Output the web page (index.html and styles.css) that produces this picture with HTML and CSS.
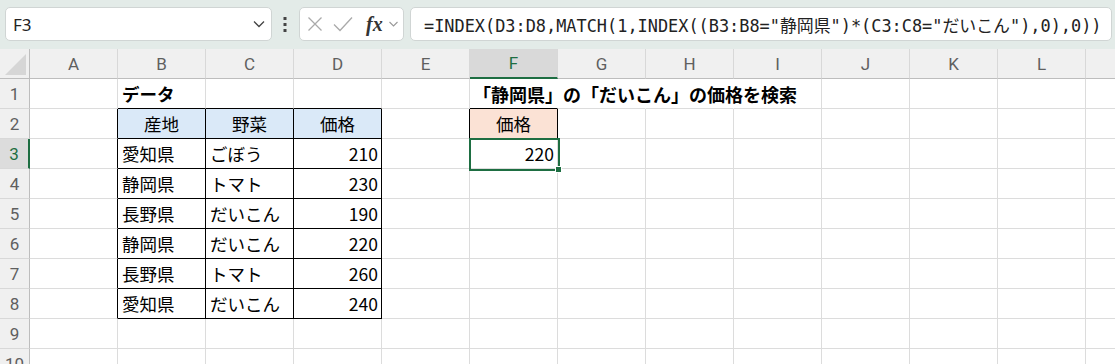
FILE: index.html
```html
<!DOCTYPE html>
<html lang="ja">
<head>
    <meta charset="UTF-8">
    <meta name="viewport" content="width=device-width, initial-scale=1.0">
    <title>価格の検索</title>
    <link rel="stylesheet" href="styles.css">
</head>
<body>
    <div class="toolbar">
        <div class="name-box">
            <span>F3</span>
            <svg width="12" height="8" viewBox="0 0 12 8"><path d="M1 1.5l5 5 5-5" fill="none" stroke="#444" stroke-width="1.3"/></svg>
        </div>
        <svg class="more" width="4" height="15" viewBox="0 0 4 15">
            <rect x="0.5" y="0" width="3" height="3" fill="#444"/>
            <rect x="0.5" y="6" width="3" height="3" fill="#444"/>
            <rect x="0.5" y="12" width="3" height="3" fill="#444"/>
        </svg>
        <div class="fx-box">
            <svg width="16" height="16" viewBox="0 0 16 16"><path d="M1.5 1.5l13 13M14.5 1.5l-13 13" stroke="#aaa" stroke-width="1.3" fill="none"/></svg>
            <svg width="20" height="16" viewBox="0 0 20 16"><path d="M1 8.5l6 6 12-13" stroke="#aaa" stroke-width="1.3" fill="none"/></svg>
            <span class="fx">fx</span>
            <svg width="9" height="6" viewBox="0 0 9 6"><path d="M0.5 1l4 4 4-4" fill="none" stroke="#999" stroke-width="1.1"/></svg>
        </div>
        <div class="formula">=INDEX(D3:D8,MATCH(1,INDEX((B3:B8="静岡県")*(C3:C8="だいこん"),0),0))</div>
    </div>

    <div class="sheet">
        <!-- column headers -->
        <div class="corner"><svg width="29" height="29" viewBox="0 0 29 29"><path d="M26 5V26H5Z" fill="#d6d6d6"/></svg></div>
        <div class="col-head">A</div>
        <div class="col-head">B</div>
        <div class="col-head">C</div>
        <div class="col-head">D</div>
        <div class="col-head">E</div>
        <div class="col-head sel">F</div>
        <div class="col-head">G</div>
        <div class="col-head">H</div>
        <div class="col-head">I</div>
        <div class="col-head">J</div>
        <div class="col-head">K</div>
        <div class="col-head">L</div>
        <div class="col-head"></div>

        <!-- row 1 -->
        <div class="row-head">1</div>
        <div class="cell"></div>
        <div class="cell t-b bold">データ</div>
        <div class="cell t-b"></div>
        <div class="cell t-b"></div>
        <div class="cell"></div>
        <div class="cell t-b ovf bold title">「静岡県」の「だいこん」の価格を検索</div>
        <div class="cell ovf"></div>
        <div class="cell ovf"></div>
        <div class="cell"></div>
        <div class="cell"></div>
        <div class="cell"></div>
        <div class="cell"></div>
        <div class="cell"></div>

        <!-- row 2 -->
        <div class="row-head">2</div>
        <div class="cell t-r"></div>
        <div class="cell tbl head-blue center">産地</div>
        <div class="cell tbl head-blue center">野菜</div>
        <div class="cell tbl head-blue center">価格</div>
        <div class="cell t-r"></div>
        <div class="cell tbl head-orange center">価格</div>
        <div class="cell"></div>
        <div class="cell"></div>
        <div class="cell"></div>
        <div class="cell"></div>
        <div class="cell"></div>
        <div class="cell"></div>
        <div class="cell"></div>

        <!-- row 3 -->
        <div class="row-head sel">3</div>
        <div class="cell t-r"></div>
        <div class="cell tbl">愛知県</div>
        <div class="cell tbl">ごぼう</div>
        <div class="cell tbl num">210</div>
        <div class="cell"></div>
        <div class="cell num active">220</div>
        <div class="cell"></div>
        <div class="cell"></div>
        <div class="cell"></div>
        <div class="cell"></div>
        <div class="cell"></div>
        <div class="cell"></div>
        <div class="cell"></div>

        <!-- row 4 -->
        <div class="row-head">4</div>
        <div class="cell t-r"></div>
        <div class="cell tbl">静岡県</div>
        <div class="cell tbl">トマト</div>
        <div class="cell tbl num">230</div>
        <div class="cell"></div>
        <div class="cell"></div>
        <div class="cell"></div>
        <div class="cell"></div>
        <div class="cell"></div>
        <div class="cell"></div>
        <div class="cell"></div>
        <div class="cell"></div>
        <div class="cell"></div>

        <!-- row 5 -->
        <div class="row-head">5</div>
        <div class="cell t-r"></div>
        <div class="cell tbl">長野県</div>
        <div class="cell tbl">だいこん</div>
        <div class="cell tbl num">190</div>
        <div class="cell"></div>
        <div class="cell"></div>
        <div class="cell"></div>
        <div class="cell"></div>
        <div class="cell"></div>
        <div class="cell"></div>
        <div class="cell"></div>
        <div class="cell"></div>
        <div class="cell"></div>

        <!-- row 6 -->
        <div class="row-head">6</div>
        <div class="cell t-r"></div>
        <div class="cell tbl">静岡県</div>
        <div class="cell tbl">だいこん</div>
        <div class="cell tbl num">220</div>
        <div class="cell"></div>
        <div class="cell"></div>
        <div class="cell"></div>
        <div class="cell"></div>
        <div class="cell"></div>
        <div class="cell"></div>
        <div class="cell"></div>
        <div class="cell"></div>
        <div class="cell"></div>

        <!-- row 7 -->
        <div class="row-head">7</div>
        <div class="cell t-r"></div>
        <div class="cell tbl">長野県</div>
        <div class="cell tbl">トマト</div>
        <div class="cell tbl num">260</div>
        <div class="cell"></div>
        <div class="cell"></div>
        <div class="cell"></div>
        <div class="cell"></div>
        <div class="cell"></div>
        <div class="cell"></div>
        <div class="cell"></div>
        <div class="cell"></div>
        <div class="cell"></div>

        <!-- row 8 -->
        <div class="row-head">8</div>
        <div class="cell t-r"></div>
        <div class="cell tbl">愛知県</div>
        <div class="cell tbl">だいこん</div>
        <div class="cell tbl num">240</div>
        <div class="cell"></div>
        <div class="cell"></div>
        <div class="cell"></div>
        <div class="cell"></div>
        <div class="cell"></div>
        <div class="cell"></div>
        <div class="cell"></div>
        <div class="cell"></div>
        <div class="cell"></div>

        <!-- row 9 -->
        <div class="row-head">9</div>
        <div class="cell"></div>
        <div class="cell"></div>
        <div class="cell"></div>
        <div class="cell"></div>
        <div class="cell"></div>
        <div class="cell"></div>
        <div class="cell"></div>
        <div class="cell"></div>
        <div class="cell"></div>
        <div class="cell"></div>
        <div class="cell"></div>
        <div class="cell"></div>
        <div class="cell"></div>

        <!-- row 10 -->
        <div class="row-head">10</div>
        <div class="cell"></div>
        <div class="cell"></div>
        <div class="cell"></div>
        <div class="cell"></div>
        <div class="cell"></div>
        <div class="cell"></div>
        <div class="cell"></div>
        <div class="cell"></div>
        <div class="cell"></div>
        <div class="cell"></div>
        <div class="cell"></div>
        <div class="cell"></div>
        <div class="cell"></div>
    </div>
</body>
</html>
```

FILE: styles.css
```css
body {
    margin: 0;
    width: 1115px;
    height: 364px;
    overflow: hidden;
    background-color: #ffffff;
    font-family: "Noto Sans CJK JP", "Noto Sans", sans-serif;
}

/* formula bar */
.toolbar {
    display: flex;
    align-items: flex-start;
    height: 49px;
    padding: 7px 3px 0 5px;
    box-sizing: border-box;
    background-color: #e3ebe8;
}
.name-box {
    width: 267px;
    height: 34px;
    box-sizing: border-box;
    display: flex;
    align-items: center;
    justify-content: space-between;
    padding: 0 6px 0 7px;
    background-color: #ffffff;
    border: 1px solid #d0d5d4;
    border-radius: 5px;
    font-family: "Noto Sans", sans-serif;
    font-size: 17px;
    color: #222;
}
.more {
    margin: 10px 12px 0 11px;
}
.fx-box {
    width: 105px;
    height: 34px;
    box-sizing: border-box;
    display: flex;
    align-items: center;
    gap: 10px;
    padding-left: 7px;
    margin-right: 6px;
    background-color: #ffffff;
    border: 1px solid #d0d5d4;
    border-radius: 5px;
}
.fx-box .fx {
    font-family: "Liberation Serif", serif;
    font-style: italic;
    font-weight: bold;
    font-size: 20px;
    color: #333;
    margin-left: 3px;
    margin-right: -4px;
}
.formula {
    flex: 1;
    height: 34px;
    box-sizing: border-box;
    display: flex;
    align-items: center;
    padding-left: 13px;
    background-color: #ffffff;
    border: 1px solid #d0d5d4;
    border-radius: 5px;
    font-family: "DejaVu Sans Mono", "Noto Sans CJK JP", monospace;
    font-size: 16.9px;
    color: #222;
    white-space: nowrap;
}

/* sheet grid */
.sheet {
    display: grid;
    grid-template-columns: 30px repeat(13, 88px);
    grid-auto-rows: 30px;
}
.corner,
.col-head,
.row-head {
    box-sizing: border-box;
    display: flex;
    align-items: center;
    justify-content: center;
    background-color: #f0f0f0;
    font-family: Roboto, "Noto Sans", sans-serif;
    font-size: 17px;
    color: #5f5f5f;
}
.corner {
    border-right: 1px solid #bdbdbd;
    border-bottom: 1px solid #bdbdbd;
    align-items: flex-start;
    justify-content: flex-start;
}
.col-head {
    border-right: 1px solid #d8d8d8;
    border-bottom: 1px solid #bdbdbd;
}
.col-head.sel {
    background-color: #d9d9d9;
    color: #1e6e42;
    border-bottom: 2px solid #1e6e42;
}
.row-head {
    border-right: 1px solid #bdbdbd;
    border-bottom: 1px solid #d8d8d8;
}
.row-head.sel {
    background-color: #dcdcdc;
    color: #1e6e42;
    border-right: 2px solid #1e6e42;
}

.cell {
    box-sizing: border-box;
    display: flex;
    align-items: center;
    padding: 0 4px;
    border-right: 1px solid #dcdcdc;
    border-bottom: 1px solid #dcdcdc;
    font-size: 17.5px;
    color: #000;
    white-space: nowrap;
}
.cell.bold { font-weight: bold; }
.cell.title {
    font-size: 18px;
    padding-left: 3px;
}
.cell.center { justify-content: center; }
.cell.num {
    justify-content: flex-end;
    padding-right: 3px;
}

/* table borders */
.cell.t-b { border-bottom-color: #000; }
.cell.t-r { border-right-color: #000; }
.cell.tbl { border-color: #000; }
.cell.ovf { border-right-color: transparent; }
.cell.head-blue { background-color: #dae9f8; }
.cell.head-orange { background-color: #fbe2d5; }

/* active cell */
.cell.active {
    position: relative;
    z-index: 1;
}
.cell.active::after {
    content: "";
    position: absolute;
    top: -1px;
    left: -1px;
    right: -3px;
    bottom: -3px;
    border: 2px solid #1e6e42;
}
.cell.active::before {
    content: "";
    position: absolute;
    right: -5px;
    bottom: -5px;
    width: 5px;
    height: 5px;
    background-color: #1e6e42;
    border: 1px solid #ffffff;
    z-index: 2;
}
```
